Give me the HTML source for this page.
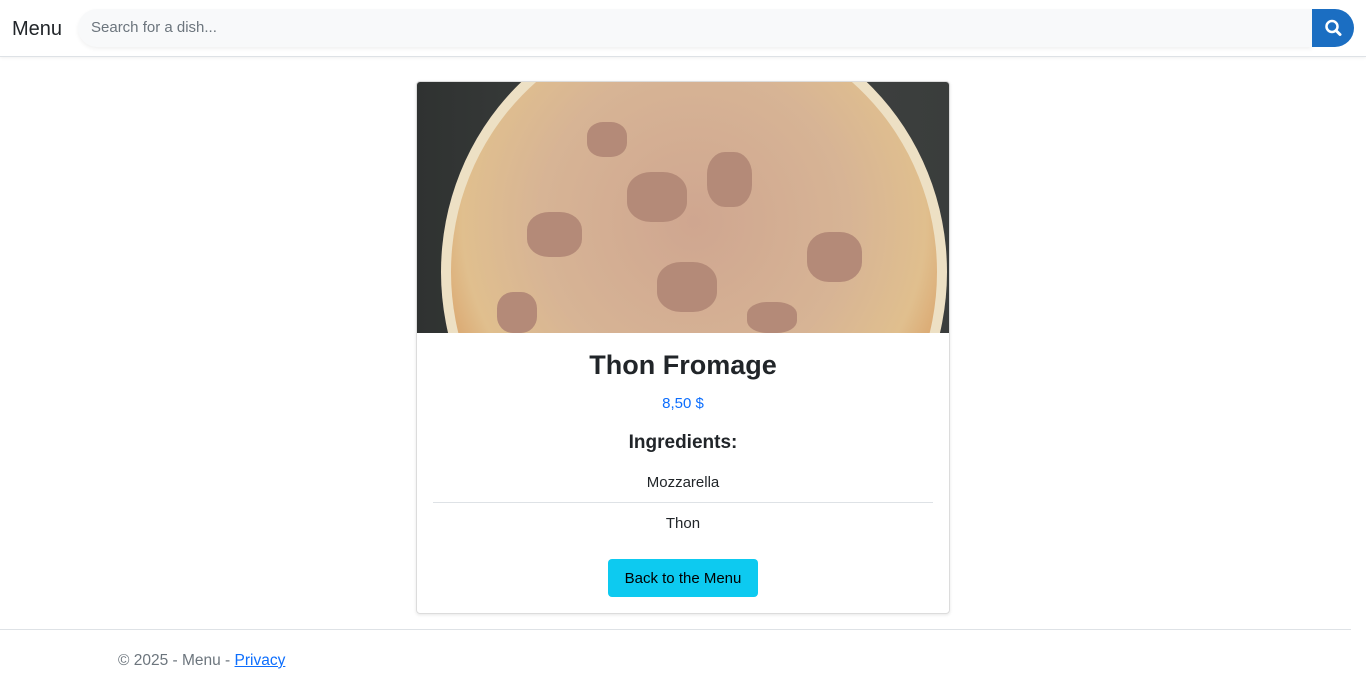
<!DOCTYPE html>
<html><head><meta charset="utf-8"><style>
body{margin:0;font-family:"Segoe UI","Liberation Sans",sans-serif;background:#fff;color:#212529;width:1366px;height:690px;overflow:hidden;position:relative}
.hdr{position:absolute;left:0;top:0;width:1366px;height:56px;border-bottom:1px solid #dee2e6;box-shadow:0 1px 3px rgba(0,0,0,.06)}
.brand{position:absolute;left:12px;top:18px;font-size:20px;color:#212529}
.search{position:absolute;left:78px;top:9px;width:1234px;height:38px;background:#f8f9fa;border-radius:19px 0 0 19px;box-shadow:0 2px 4px rgba(0,0,0,.06)}
.search span{position:absolute;left:13px;top:10px;font-size:15px;color:#6c757d}
.btn{position:absolute;left:1312px;top:9px;width:42px;height:38px;background:#1b6ec2;border-radius:0 19px 19px 0}
.card{position:absolute;left:416px;top:81px;width:532px;height:531px;border:1px solid #dcdcdc;border-radius:4px;box-shadow:0 1px 3px rgba(0,0,0,.1);overflow:hidden}
.img{position:absolute;left:0;top:0;width:532px;height:251px;background:linear-gradient(90deg,#2f3231,#414443 50%,#3a3d3c);overflow:hidden}
.pz{position:absolute;left:24px;top:-70px;width:506px;height:520px;border-radius:50%;background:#ede0c4;}
.in{position:absolute;left:34px;top:-60px;width:486px;height:500px;border-radius:50%;background:radial-gradient(circle at 50% 40%,#cfa690 0,#d7b495 40%,#e0bf8e 60%,#d48a4a 80%,#e9d3a6 100%);}
.s{position:absolute;border-radius:40%;background:#b48a78}
.t{position:absolute;width:532px;text-align:center}
.ing{position:absolute;left:16px;width:500px;text-align:center;font-size:15px}
.back{position:absolute;left:191px;top:477px;width:150px;height:38px;background:#0dcaf0;border-radius:4px;font-size:15px;line-height:40px;text-align:center;color:#000}
.foot{position:absolute;left:0;top:629px;width:1351px;border-top:1px solid #dee2e6}
.foot span{position:absolute;left:118px;top:22px;font-size:15.5px;color:#6c757d;white-space:nowrap}
</style></head><body>
<div class="hdr"><div class="brand">Menu</div><div class="search"><span>Search for a dish...</span></div>
<div class="btn"><svg width="42" height="38"><circle cx="20" cy="17.5" r="5.5" fill="none" stroke="#fff" stroke-width="2.5"/><line x1="24" y1="21.5" x2="28" y2="25.5" stroke="#fff" stroke-width="3" stroke-linecap="round"/></svg></div></div>
<div class="card">
<div class="img"><div class="pz"></div><div class="in"></div>
<div class="s" style="left:210px;top:90px;width:60px;height:50px"></div>
<div class="s" style="left:290px;top:70px;width:45px;height:55px"></div>
<div class="s" style="left:110px;top:130px;width:55px;height:45px"></div>
<div class="s" style="left:240px;top:180px;width:60px;height:50px"></div>
<div class="s" style="left:390px;top:150px;width:55px;height:50px"></div>
<div class="s" style="left:170px;top:40px;width:40px;height:35px"></div>
<div class="s" style="left:330px;top:220px;width:50px;height:31px"></div>
<div class="s" style="left:80px;top:210px;width:40px;height:41px"></div>
</div>
<div class="t" style="top:268px;font-size:27px;font-weight:600">Thon Fromage</div>
<div class="t" style="top:313px;font-size:15px;color:#0d6efd">8,50 $</div>
<div class="t" style="top:350px;font-size:19px;font-weight:600">Ingredients:</div>
<div class="ing" style="top:392px;">Mozzarella</div>
<div style="position:absolute;left:16px;top:420px;width:500px;border-top:1px solid #dee2e6"></div>
<div class="ing" style="top:433px;">Thon</div>
<div class="back">Back to the Menu</div>
</div>
<div class="foot"><span>© 2025 - Menu - <u style="color:#0d6efd">Privacy</u></span></div>
</body></html>
